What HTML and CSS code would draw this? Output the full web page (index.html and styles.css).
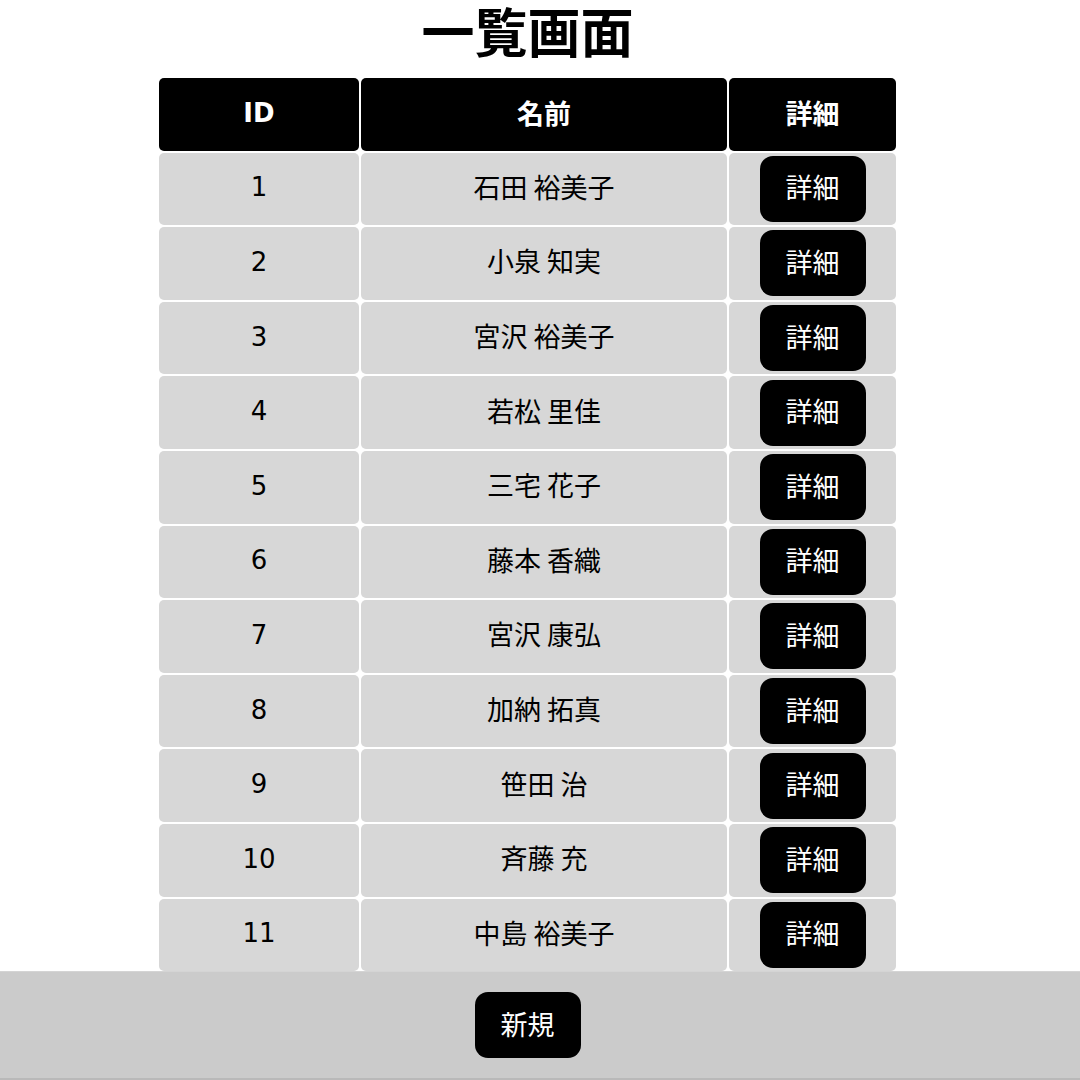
FILE: index.html
```html
<!DOCTYPE html>
<html lang="ja">
<head>
<meta charset="utf-8">
<title>一覧画面</title>
<link rel="stylesheet" href="styles.css">
</head>
<body>
<main class="page">
  <h1 class="title">一覧画面</h1>
  <table class="list">
    <thead>
      <tr><th class="col-id">ID</th><th class="col-name">名前</th><th class="col-detail">詳細</th></tr>
    </thead>
    <tbody>
      <tr><td>1</td><td class="name">石田 裕美子</td><td><button class="btn">詳細</button></td></tr>
      <tr><td>2</td><td class="name">小泉 知実</td><td><button class="btn">詳細</button></td></tr>
      <tr><td>3</td><td class="name">宮沢 裕美子</td><td><button class="btn">詳細</button></td></tr>
      <tr><td>4</td><td class="name">若松 里佳</td><td><button class="btn">詳細</button></td></tr>
      <tr><td>5</td><td class="name">三宅 花子</td><td><button class="btn">詳細</button></td></tr>
      <tr><td>6</td><td class="name">藤本 香織</td><td><button class="btn">詳細</button></td></tr>
      <tr><td>7</td><td class="name">宮沢 康弘</td><td><button class="btn">詳細</button></td></tr>
      <tr><td>8</td><td class="name">加納 拓真</td><td><button class="btn">詳細</button></td></tr>
      <tr><td>9</td><td class="name">笹田 治</td><td><button class="btn">詳細</button></td></tr>
      <tr><td>10</td><td class="name">斉藤 充</td><td><button class="btn">詳細</button></td></tr>
      <tr><td>11</td><td class="name">中島 裕美子</td><td><button class="btn">詳細</button></td></tr>
    </tbody>
  </table>
</main>
<footer class="footer">
  <div class="footer-inner">
    <button class="btn">新規</button>
  </div>
</footer>
</body>
</html>
```
FILE: styles.css
```css
html, body {
  margin: 0;
  padding: 0;
  background: #ffffff;
}

body {
  font-family: "DejaVu Sans", "Noto Sans CJK JP", sans-serif;
  color: #000000;
}

.page {
  width: 1055px;
  padding-bottom: 120px;
}

.title {
  margin: 0;
  height: 76px;
  line-height: 60px;
  font-family: "Noto Sans CJK JP", sans-serif;
  font-size: 53px;
  font-weight: 700;
  text-align: center;
  overflow: visible;
}

.list {
  margin: 0 auto;
  border-collapse: separate;
  border-spacing: 2px;
}

.list th,
.list td {
  height: 72.6px;
  padding: 0 0 3px;
  box-sizing: border-box;
  text-align: center;
  vertical-align: middle;
  border-radius: 5px;
  font-size: 26px;
}

.list th {
  background: #000000;
  color: #ffffff;
  font-weight: 700;
  font-family: "DejaVu Sans", "Noto Sans CJK JP", sans-serif;
  font-size: 26px;
}

.list th.col-name,
.list th.col-detail {
  font-family: "Noto Sans CJK JP", sans-serif;
  font-size: 27px;
}

.list td {
  background: #d7d7d7;
}

.list td.name {
  font-family: "Noto Sans CJK JP", sans-serif;
  font-size: 27px;
  padding: 0 0 5px;
}

.col-id { width: 200px; }
.col-name { width: 366px; }
.col-detail { width: 167px; }

.btn {
  display: inline-flex;
  align-items: center;
  justify-content: center;
  width: 106px;
  height: 66px;
  padding: 0 0 4px;
  box-sizing: border-box;
  border: none;
  border-radius: 13px;
  background: #000000;
  color: #ffffff;
  font-family: "Noto Sans CJK JP", sans-serif;
  font-size: 27px;
  vertical-align: middle;
}

.list td .btn {
  margin-top: 3px;
}

.footer {
  position: fixed;
  left: 0;
  right: 0;
  bottom: 0;
  height: 106px;
  background: #cbcbcb;
  border-top: 1px solid #d4d4d4;
  border-bottom: 2px solid #b9b9b9;
}

.footer-inner {
  width: 1055px;
  height: 100%;
  display: flex;
  align-items: center;
  justify-content: center;
}
```
